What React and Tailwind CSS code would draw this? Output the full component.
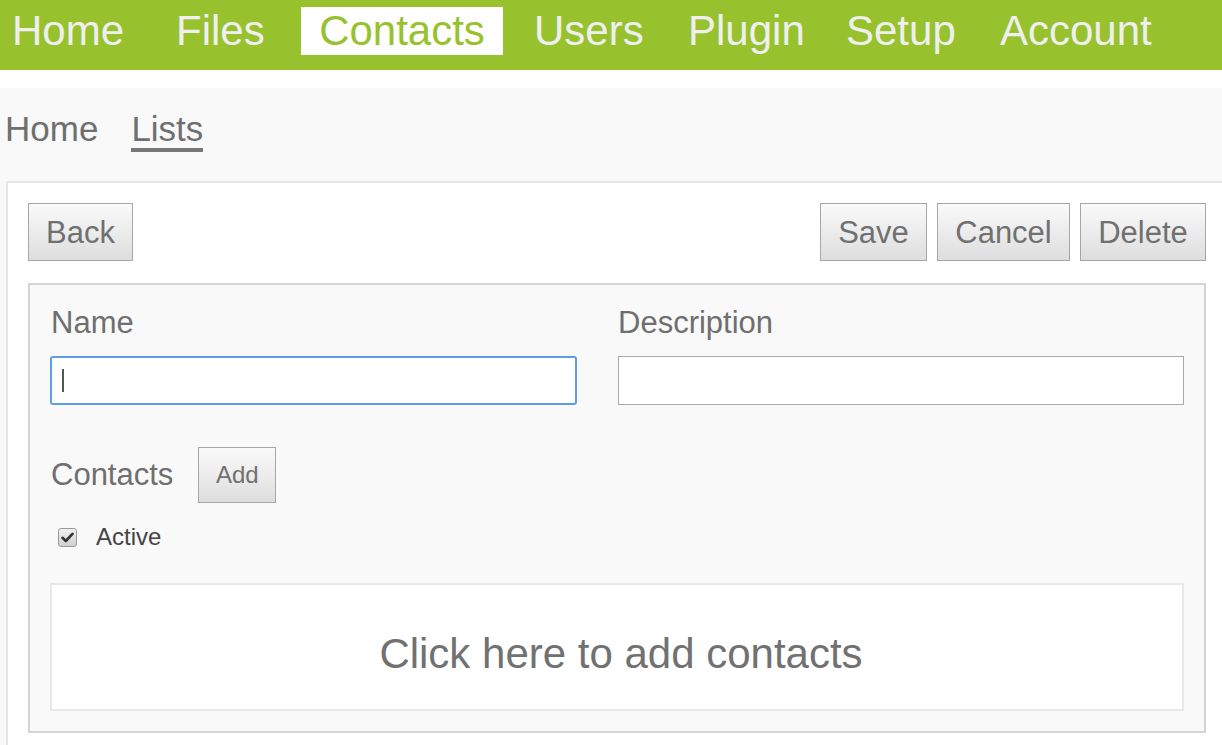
import { useState } from 'react';

const NAV = [
  { label: 'Home', cls: 'w-[164px] pl-4 text-[#efefef]' },
  { label: 'Files', cls: 'w-[141px] pl-4 text-[#efefef]' },
  { label: 'Contacts', cls: 'w-[202px] text-center mr-[15px] bg-white text-[#97c22e]' },
  { label: 'Users', cls: 'w-[154px] pl-4 text-[#efefef]' },
  { label: 'Plugin', cls: 'w-[158px] pl-4 text-[#efefef]' },
  { label: 'Setup', cls: 'w-[154px] pl-4 text-[#efefef]' },
  { label: 'Account', cls: 'w-[180px] pl-4 text-[#efefef]' },
];

const btn =
  'border border-[#a6a6a6] bg-gradient-to-b from-[#fafafa] to-[#dedede] text-[#707070] leading-none';

const App = () => {
  const [active, setActive] = useState(true);

  return (
    <div className="w-[1222px] h-[745px] overflow-hidden bg-[#f9f9f9] font-['Liberation_Sans',Arial,sans-serif]">
      {/* top nav */}
      <div className="h-[70px] bg-[#97c22e] pt-[7px]">
        <div className="flex -ml-1">
          {NAV.map((item) => (
            <span key={item.label} className={`shrink-0 h-12 text-[42px] leading-[48px] ${item.cls}`}>
              {item.label}
            </span>
          ))}
        </div>
      </div>
      <div className="h-[18px] bg-white" />

      {/* breadcrumbs */}
      <div className="flex gap-[33px] pl-[5px] pt-[21px] h-[93px] text-[35px] leading-[40px] text-[#6f6f6f]">
        <span>Home</span>
        <span className="border-b-4 border-[#777] h-[43px]">Lists</span>
      </div>

      {/* panel */}
      <div className="ml-[6px] w-[1222px] h-[600px] border-2 border-[#e6e6e6] bg-white px-5 pt-5">
        <div className="flex items-start">
          <button className={`${btn} w-[105px] h-[58px] text-[31px]`}>Back</button>
          <div className="ml-auto flex gap-[10px]">
            <button className={`${btn} w-[107px] h-[58px] text-[31px]`}>Save</button>
            <button className={`${btn} w-[133px] h-[58px] text-[31px]`}>Cancel</button>
            <button className={`${btn} w-[126px] h-[58px] text-[31px]`}>Delete</button>
          </div>
        </div>

        <div className="mt-[22px] border-2 border-[#d4d4d4] bg-[#f9f9f9] px-5 pt-5 pb-5">
          <div className="grid grid-cols-2">
            <div>
              <div className="text-[31px] leading-[36px] text-[#6f6f6f] pl-px">Name</div>
              <div className="mt-[15px] w-[527px] h-[49px] border-2 border-[#5f9de8] rounded-[3px] bg-white flex items-center pl-[10px]">
                <span className="w-[2px] h-[23px] bg-[#555]" />
              </div>
            </div>
            <div className="pl-px">
              <div className="text-[31px] leading-[36px] text-[#6f6f6f]">Description</div>
              <input className="mt-[15px] w-full h-[49px] border border-[#a9a9a9] bg-white outline-none" />
            </div>
          </div>

          <div className="mt-[42px] flex items-center gap-[25px]">
            <span className="text-[31px] leading-[36px] text-[#6f6f6f] pl-px">Contacts</span>
            <button className={`${btn} w-[78px] h-[56px] text-[24px] text-[#444]`}>Add</button>
          </div>

          <label className="mt-[18px] flex items-center gap-[19px] pl-[8px] h-[32px]">
            <span
              onClick={() => setActive((a) => !a)}
              className="w-[19px] h-[19px] rounded-[3px] border border-[#9a9a9a] bg-gradient-to-b from-[#f2f2f2] to-[#cfcfcf] flex items-center justify-center"
            >
              {active && (
                <svg width="13" height="11" viewBox="0 0 13 11">
                  <path d="M1.5 5.8 L4.8 9 L11.5 1.8" fill="none" stroke="#333" strokeWidth="2.6" strokeLinecap="round" strokeLinejoin="round" />
                </svg>
              )}
            </span>
            <span className="text-[24px] leading-[28px] text-[#444]">Active</span>
          </label>

          <div className="mt-[30px] h-[128px] border-2 border-[#e8e8e8] bg-white flex items-center justify-center pt-3 pl-2 text-[42px] text-[#717171]">
            Click here to add contacts
          </div>
        </div>
      </div>
    </div>
  );
};

export default App;
